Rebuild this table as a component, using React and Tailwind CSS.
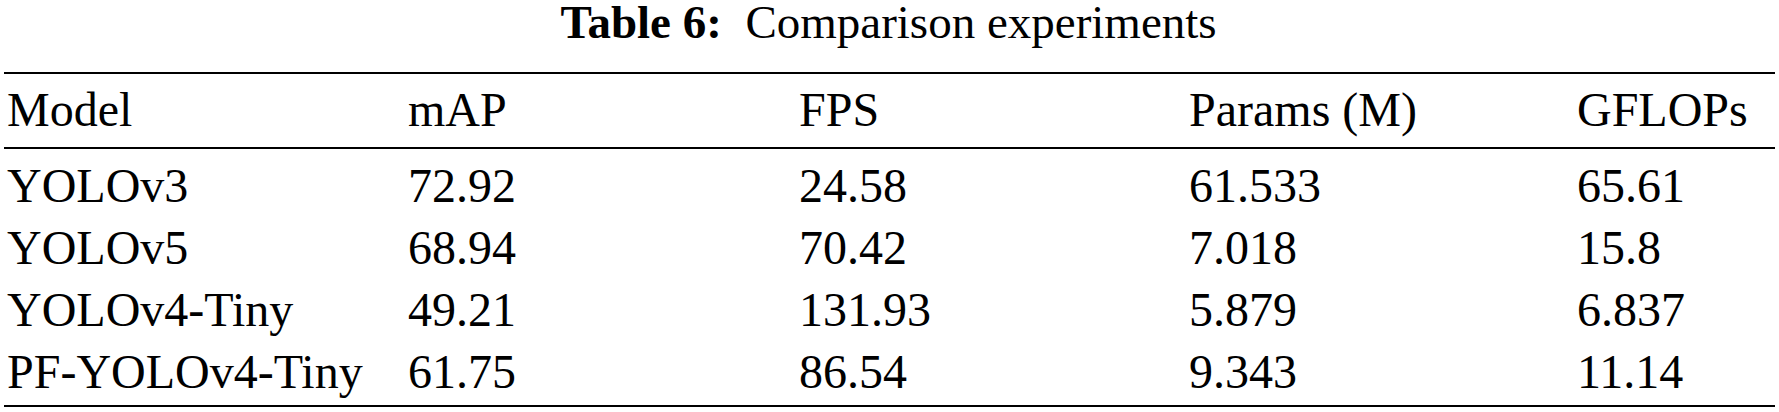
const columns = ["Model", "mAP", "FPS", "Params (M)", "GFLOPs"];

const rows = [
  ["YOLOv3", "72.92", "24.58", "61.533", "65.61"],
  ["YOLOv5", "68.94", "70.42", "7.018", "15.8"],
  ["YOLOv4-Tiny", "49.21", "131.93", "5.879", "6.837"],
  ["PF-YOLOv4-Tiny", "61.75", "86.54", "9.343", "11.14"],
];

const grid = "grid grid-cols-[401px_391px_390px_388px_1fr]";

const App = () => {
  return (
    <div className="w-[1779px] h-[412px] bg-white text-black font-[family-name:Liberation_Serif,serif] overflow-hidden">
      <div className="h-[72px] pt-[2px] text-center text-[47px] leading-[40px] pr-[2px]">
        <span className="font-bold">Table 6:</span>
        <span>&nbsp; Comparison experiments</span>
      </div>

      <div className="mx-[4px] border-t-2 border-b-2 border-black">
        <div className={`${grid} pt-[12px] pb-[13px] text-[48px] leading-[48px] border-b-2 border-black`}>
          {columns.map((c) => (
            <span key={c} className="pl-[3px] whitespace-nowrap">{c}</span>
          ))}
        </div>

        <div className="pt-[6px] pb-[2px]">
          {rows.map((row, i) => (
            <div key={i} className={`${grid} text-[48px] leading-[62px]`}>
              {row.map((cell, j) => (
                <span key={j} className="pl-[3px] whitespace-nowrap">{cell}</span>
              ))}
            </div>
          ))}
        </div>
      </div>
    </div>
  );
};

export default App;
